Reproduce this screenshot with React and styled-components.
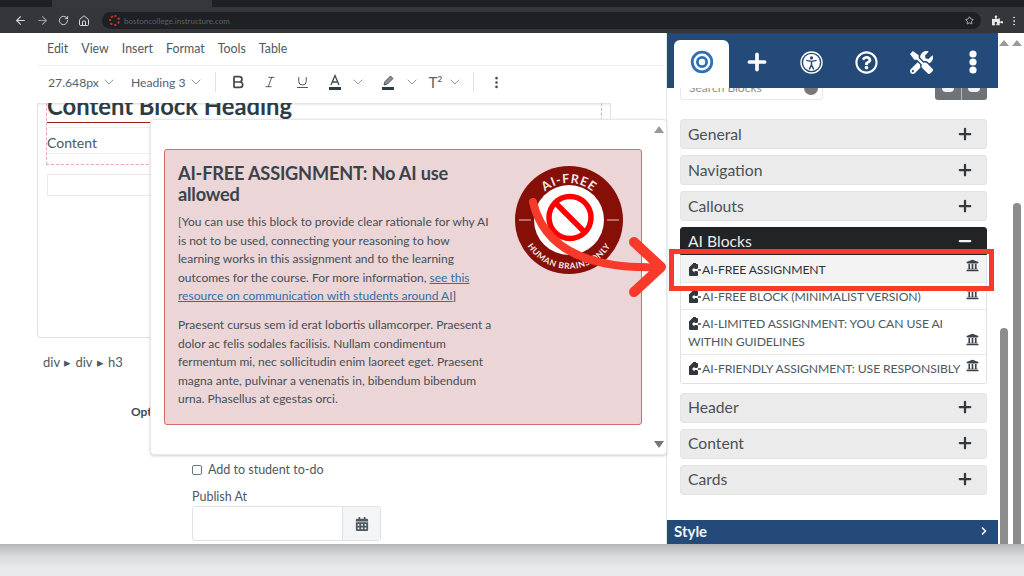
import React from 'react';
import styled, { createGlobalStyle } from 'styled-components';
import { ArrowLeft, ArrowRight, RotateCw, Home, Star, EllipsisVertical, ChevronDown, ChevronRight, Bold, Italic, Underline, Plus, Minus } from 'lucide-react';
import { FaCalendarAlt, FaPuzzlePiece, FaRegQuestionCircle, FaTools, FaUniversity } from 'react-icons/fa';

const GlobalStyle = createGlobalStyle`
  html, body { margin: 0; padding: 0; height: 576px; overflow: hidden; background: #e9eaeb; }
  body { font-family: Lato, 'Liberation Sans', sans-serif; color: #3f4a52; }
  * { box-sizing: border-box; }
`;

const Page = styled.div`
  position: relative;
  width: 1024px;
  height: 576px;
  overflow: hidden;
  display: flex;
  flex-direction: column;
`;

/* browser chrome */
const TabStrip = styled.div`
  height: 7px;
  flex: none;
  background: #1f2023;
  display: flex;
  padding-left: 52px;
`;
const ActiveTab = styled.div`
  width: 160px;
  background: #36373b;
`;
const BrowserBar = styled.div`
  height: 26px;
  flex: none;
  background: #35363a;
  display: flex;
  align-items: center;
  padding: 5px 4px 4px 14px;
  color: #d8d9db;
  gap: 9px;
`;
const UrlBar = styled.div`
  flex: 1;
  height: 17px;
  margin-left: 3px;
  margin-right: 2px;
  border-radius: 9px;
  background: #1f2023;
  display: flex;
  align-items: center;
  padding: 0 7px;
  gap: 4px;
  font-size: 8px;
  color: #5e6064;
`;
const Favicon = styled.span`
  width: 11px;
  height: 11px;
  border-radius: 50%;
  border: 2.5px dotted #c8362c;
`;
const Grow = styled.span`
  flex: 1;
`;
const ExtensionIcons = styled.div`
  display: flex;
  align-items: center;
  gap: 5px;
`;

/* page body */
const Body = styled.div`
  flex: none;
  height: 511px;
  background: #fff;
  display: flex;
  overflow: hidden;
`;
const Editor = styled.div`
  width: 667px;
  flex: none;
  border-right: 1px solid #e5e7e9;
  padding-left: 37px;
  display: flex;
  flex-direction: column;
`;
const MenuBar = styled.div`
  height: 33px;
  flex: none;
  display: flex;
  align-items: center;
  gap: 13px;
  padding: 0 0 2px 10px;
  font-size: 12.4px;
  color: #4d5961;
  border-bottom: 1px solid #eef0f1;
`;
const Toolbar = styled.div`
  height: 37px;
  flex: none;
  display: flex;
  align-items: center;
  padding: 0 0 5px 11px;
  font-size: 12.2px;
  color: #56626b;
`;
const ToolText = styled.span`
  display: inline-flex;
  align-items: center;
  gap: 2px;
  margin-right: ${(p) => p.$right || 0}px;
`;
const ToolIcon = styled.span`
  display: inline-flex;
  align-items: center;
  justify-content: center;
  margin-left: ${(p) => p.$gap || 0}px;
  color: ${(p) => (p.$muted ? '#7d878f' : '#3f4a52')};
`;
const Divider = styled.span`
  width: 1px;
  height: 20px;
  margin: 0 ${(p) => p.$right}px 0 ${(p) => p.$left}px;
  background: #dfe3e6;
`;
const SwatchIcon = styled.svg`
  display: block;
`;
const SuperT = styled.span`
  width: 18px;
  font-size: 15px;
  font-weight: 400;
  line-height: 16px;
  color: #56626b;
  sup {
    font-size: 8px;
    font-weight: 700;
    line-height: 0;
  }
`;
const EditFrame = styled.div`
  width: 574px;
  height: 235px;
  flex: none;
  border: 1px solid #dfe1e3;
  border-top: 0;
  border-radius: 0 0 3px 3px;
  padding: 0 8px;
  overflow: hidden;
  box-shadow: inset 0 3px 3px -2px #d5d7d9;
`;
const DashedBlock = styled.div`
  display: flow-root;
  height: 62px;
  border: 1px dashed #eba6b4;
  border-top: 0;
`;
const BlockHeading = styled.h3`
  margin: -11px 0 0;
  height: 27px;
  font-size: 23.8px;
  line-height: 28px;
  font-weight: 700;
  color: #2d3b45;
`;
const RedRule = styled.div`
  width: 104px;
  height: 1px;
  margin-top: 3px;
  background: #9e1b1b;
`;
const ContentCell = styled.div`
  height: 27px;
  margin-top: 4px;
  padding-top: 7px;
  border: 1px solid #eef0f1;
  border-left: 0;
  font-size: 14px;
  line-height: 16px;
  color: #4d5961;
`;
const EmptyCell = styled.div`
  height: 22px;
  margin: 9px 0 0 1px;
  border: 1px solid #e8eaec;
`;
const Path = styled.div`
  margin: 16px 0 0 6px;
  font-size: 13px;
  color: #4d5961;
  word-spacing: 1px;
`;
const Options = styled.div`
  margin: 34px 0 0 94px;
  font-size: 12px;
  font-weight: 700;
  color: #3f4a52;
`;
const FormCol = styled.div`
  margin: 43px 0 0 155px;
  font-size: 12.5px;
  color: #4d5961;
`;
const CheckRow = styled.label`
  display: flex;
  align-items: center;
  gap: 6px;
`;
const CheckBox = styled.span`
  width: 10px;
  height: 10px;
  border: 1px solid #6b7780;
  border-radius: 2px;
`;
const FieldLabel = styled.div`
  margin-top: 12px;
  margin-bottom: 2px;
`;
const DateField = styled.div`
  width: 189px;
  height: 35px;
  display: flex;
  border: 1px solid #dfe3e6;
  border-radius: 3px;
`;
const DateInput = styled.div`
  flex: 1;
`;
const DateButton = styled.div`
  width: 38px;
  background: #f4f5f6;
  border-left: 1px solid #dfe3e6;
  display: flex;
  align-items: center;
  justify-content: center;
  color: #4d5961;
`;

/* preview popover over the editor */
const Popover = styled.div`
  position: absolute;
  left: 150px;
  top: 119px;
  width: 517px;
  height: 336px;
  background: #fff;
  border: 1px solid #e6e7e8;
  border-radius: 4px;
  box-shadow: 0 1px 3px rgba(0, 0, 0, 0.18);
  padding: 29px 24px 0 13px;
`;
const ScrollArrow = styled.span`
  position: absolute;
  right: 2px;
  ${(p) => (p.$down ? 'bottom: 6px;' : 'top: 6px;')}
  width: 0;
  height: 0;
  border-left: 5px solid transparent;
  border-right: 5px solid transparent;
  ${(p) => (p.$down ? 'border-top: 7px solid #777;' : 'border-bottom: 7px solid #999;')}
`;
const Callout = styled.div`
  position: relative;
  height: 276px;
  background: #ebd5d7;
  border: 1px solid #d9696c;
  border-radius: 3px;
  padding: 13px 13px;
  color: #454e55;
`;
const CalloutTitle = styled.h3`
  margin: 0 0 8px;
  width: 300px;
  font-size: 18.2px;
  line-height: 21px;
  font-weight: 700;
  letter-spacing: -0.2px;
  color: #3b4349;
`;
const CalloutText = styled.p`
  margin: 0 0 10px;
  width: 315px;
  font-size: 12px;
  line-height: 18.6px;
  a { color: #2f6fa8; text-decoration: underline; }
`;
const Badge = styled.svg`
  position: absolute;
  left: 350px;
  top: 16px;
`;

/* block sidebar */
const Sidebar = styled.div`
  position: relative;
  width: 332px;
  flex: none;
  display: flex;
  flex-direction: column;
`;
const SideTabs = styled.div`
  width: 331px;
  height: 55px;
  flex: none;
  background: #234a78;
  display: flex;
  align-items: flex-end;
  padding-left: 7px;
  color: #fff;
`;
const SideTab = styled.div`
  width: ${(p) => p.$w || 55}px;
  height: 48px;
  display: flex;
  align-items: center;
  justify-content: center;
  padding-bottom: 4px;
  border-radius: 6px 6px 0 0;
  background: ${(p) => (p.$active ? '#fff' : 'transparent')};
  color: ${(p) => (p.$active ? '#2d71b8' : '#fff')};
`;
const SearchRow = styled.div`
  height: 31px;
  flex: none;
  padding: 0 12px 0 13px;
  display: flex;
  justify-content: space-between;
  align-items: flex-start;
`;
const SearchBox = styled.div`
  width: 143px;
  height: 12px;
  display: flex;
  align-items: flex-end;
  justify-content: space-between;
  padding: 0 4px 0 8px;
  border: 1px solid #e4e8ec;
  border-top: 0;
  border-radius: 0 0 4px 4px;
  font-size: 12px;
  line-height: 12px;
  color: #8b8f93;
  overflow: hidden;
`;
const SearchHint = styled.span`
  margin-bottom: 5px;
`;
const SearchClear = styled.span`
  width: 14px;
  height: 14px;
  flex: none;
  margin-bottom: 4px;
  border-radius: 50%;
  background: #777;
`;
const ToggleGroup = styled.div`
  width: 52px;
  height: 12px;
  display: flex;
  border-radius: 0 0 3px 3px;
  overflow: hidden;
  background: #6e7378;
`;
const Toggle = styled.span`
  flex: 1;
  display: flex;
  justify-content: center;
  & + & { border-left: 1px solid #bbb; }
  &::before {
    content: '';
    width: 12px;
    height: 4px;
    border-radius: 0 0 5px 5px;
    background: #f2f3f4;
  }
`;
const Accordions = styled.div`
  flex: 1;
  padding: 0 12px 0 13px;
`;
const Section = styled.div`
  height: 30px;
  margin-bottom: 6px;
  padding: 0 12px 1px 7px;
  display: flex;
  align-items: center;
  justify-content: space-between;
  background: #ebebeb;
  border: 1px solid #e3e4e5;
  border-radius: 3px;
  font-size: 15.7px;
  color: #4a5056;
`;
const OpenSection = styled(Section)`
  height: 28px;
  margin: 0;
  padding-top: 1px;
  background: #212327;
  border-color: #212327;
  border-radius: 3px 3px 0 0;
  color: #e9eaeb;
`;
const BlockList = styled.div`
  margin-bottom: 9px;
  border: 1px solid #dfe3e6;
  border-top: 0;
  border-radius: 0 0 3px 3px;
`;
const BlockRow = styled.div`
  position: relative;
  min-height: ${(p) => (p.$tall ? 45 : 27.5)}px;
  padding: ${(p) => (p.$hot ? 6 : 5)}px 24px 2px 7px;
  border-bottom: 1px solid #e6e9eb;
  background: ${(p) => (p.$hot ? '#f3f3f4' : '#fff')};
  color: ${(p) => (p.$hot ? '#2d3338' : '#4d5961')};
  font-size: 12.2px;
  line-height: 18px;
  letter-spacing: -0.1px;
  &:last-child { border-bottom: 0; }
`;
const BlockGlyph = styled.svg`
  vertical-align: -2px;
  margin-right: 1px;
`;
const RowBank = styled.span`
  position: absolute;
  right: 7px;
  top: ${(p) => (p.$tall ? 23 : 4)}px;
  display: flex;
  color: #3a4148;
`;
const StyleBar = styled.div`
  width: 331px;
  height: 24px;
  flex: none;
  display: flex;
  align-items: center;
  justify-content: space-between;
  padding: 0 8px 2px 7px;
  background: #234a78;
  color: #f2f4f7;
  font-size: 15px;
  font-weight: 700;
`;

/* window scrollbars */
const Gutter = styled.div`
  flex: 1;
  display: flex;
  gap: 3px;
  background: #fff;
`;
const ScrollColumn = styled.div`
  width: 10px;
  padding-top: 7px;
  display: flex;
  flex-direction: column;
  align-items: center;
`;
const TopArrow = styled.span`
  width: 0;
  height: 0;
  border-left: 5px solid transparent;
  border-right: 5px solid transparent;
  border-bottom: 6px solid #9a9a9a;
`;
const Thumb = styled.div`
  width: 8px;
  height: ${(p) => p.$h}px;
  margin-top: auto;
  border-radius: 4px 4px 0 0;
  background: #8c8c8c;
`;
const BottomShade = styled.div`
  flex: 1;
  background: linear-gradient(#b5b6b7, #c9cacb 6px, #dcdde0 14px, #e9eaeb 24px);
`;

/* red annotation */
const Highlight = styled.div`
  position: absolute;
  left: 669px;
  top: 249px;
  width: 325px;
  height: 42px;
  border: 5px solid #f83a2b;
`;
const Annotation = styled.svg`
  position: absolute;
  left: 520px;
  top: 190px;
`;

const BadgeArt = () => (
  <Badge width="108" height="108" viewBox="0 0 108 108">
    <defs>
      <path id="arcTop" d="M17 54a37 37 0 0 1 74 0" />
      <path id="arcBottom" d="M5 54a49 49 0 0 0 98 0" />
    </defs>
    <circle cx="54" cy="54" r="54" fill="#860f08" />
    <circle cx="54" cy="54" r="35" fill="#fff" />
    <path d="M4 54h12M92 54h12" stroke="#e8c9c6" strokeWidth="1" />
    <text fontFamily="Lato, sans-serif" fontSize="12.5" fontWeight="700" fill="#f4e6e4" letterSpacing="0.8">
      <textPath href="#arcTop" startOffset="50%" textAnchor="middle">AI-FREE</textPath>
    </text>
    <text fontFamily="Lato, sans-serif" fontSize="8.5" fontWeight="700" fill="#f4e6e4" letterSpacing="0.5">
      <textPath href="#arcBottom" startOffset="50%" textAnchor="middle">HUMAN BRAINS ONLY</textPath>
    </text>
    <circle cx="55" cy="51.5" r="21" fill="none" stroke="#ff0000" strokeWidth="5.5" />
    <path d="M41 37.5l28 28" stroke="#ff0000" strokeWidth="5.5" />
  </Badge>
);

const PuzzleGlyph = () => (
  <BlockGlyph width="13" height="13" viewBox="0 0 13 13">
    <path d="M1 4.5L4.5 1H5V0h3v1h1.5Q10 1 10 2v3.5h-1V8.5h1V12q0 1-1 1H2q-1 0-1-1z" fill="#30363c" />
    <path d="M6.5 4.5L4 7l2.5 2.5V8H13V6H6.5z" fill="#fff" />
    <path d="M10 6.3h3v1.4h-3z" fill="#30363c" />
  </BlockGlyph>
);

const TargetIcon = () => (
  <svg width="24" height="24" viewBox="0 0 24 24" fill="none" stroke="currentColor" strokeWidth="2.8">
    <circle cx="12" cy="12" r="9.8" />
    <circle cx="12" cy="12" r="4.6" />
  </svg>
);

const AccessIcon = () => (
  <svg width="23" height="23" viewBox="0 0 24 24" fill="none" stroke="#fff">
    <circle cx="12" cy="12" r="11" strokeWidth="1.4" />
    <circle cx="12" cy="12" r="8.8" fill="#fff" stroke="none" />
    <circle cx="12" cy="7.2" r="1.7" fill="#234a78" stroke="none" />
    <path d="M6.6 9.8l5.4 1 5.4-1M12 11v3.5M12 14.5l-2.4 4.6M12 14.5l2.4 4.6" stroke="#234a78" strokeWidth="1.5" />
  </svg>
);

const DotsIcon = () => (
  <svg width="8" height="24" viewBox="0 0 8 24" fill="#fff">
    <circle cx="4" cy="4" r="3.6" />
    <circle cx="4" cy="12" r="3.6" />
    <circle cx="4" cy="20" r="3.6" />
  </svg>
);

const TextColorIcon = () => (
  <SwatchIcon width="14" height="16" viewBox="0 0 14 16" fill="none" stroke="#3f4a52">
    <path d="M3 11L7 1.5 11 11M4.5 8h5" strokeWidth="1.3" />
    <path d="M1 14.5h12" stroke="#2d3b45" strokeWidth="3" />
  </SwatchIcon>
);

const HighlightIcon = () => (
  <SwatchIcon width="14" height="16" viewBox="0 0 14 16" fill="none" stroke="#3f4a52">
    <path d="M3 11l1-3.5L9.5 2l2.5 2.5L6.5 10z" fill="#8b9298" strokeWidth="0.9" />
    <path d="M1 14.5h12" stroke="#2d3b45" strokeWidth="3" />
  </SwatchIcon>
);

const blocks = [
  { name: 'AI-FREE ASSIGNMENT', hot: true },
  { name: 'AI-FREE BLOCK (MINIMALIST VERSION)' },
  { name: 'AI-LIMITED ASSIGNMENT: YOU CAN USE AI WITHIN GUIDELINES', tall: true },
  { name: 'AI-FRIENDLY ASSIGNMENT: USE RESPONSIBLY' },
];

export default function App() {
  const caret = <ChevronDown size={16} strokeWidth={1.1} color="#6b757d" />;
  return (
    <Page>
      <GlobalStyle />
      <TabStrip><ActiveTab /></TabStrip>
      <BrowserBar>
        <ArrowLeft size={13} />
        <ArrowRight size={13} color="#9a9b9e" />
        <RotateCw size={11} />
        <Home size={12} />
        <UrlBar>
          <Favicon />
          bostoncollege.instructure.com
          <Grow />
          <Star size={9} color="#d8d9db" />
        </UrlBar>
        <ExtensionIcons>
          <FaPuzzlePiece size={11} color="#e8e9ea" />
          <EllipsisVertical size={12} />
        </ExtensionIcons>
      </BrowserBar>
      <Body>
        <Editor>
          <MenuBar>
            <span>Edit</span><span>View</span><span>Insert</span><span>Format</span><span>Tools</span><span>Table</span>
          </MenuBar>
          <Toolbar>
            <ToolText $right={14}>27.648px {caret}</ToolText>
            <ToolText>Heading 3 {caret}</ToolText>
            <Divider $left={11} $right={14} />
            <ToolIcon><Bold size={16} strokeWidth={2.6} /></ToolIcon>
            <ToolIcon $gap={17}><Italic size={14} strokeWidth={1.5} /></ToolIcon>
            <ToolIcon $gap={18}><Underline size={15} strokeWidth={1.5} /></ToolIcon>
            <ToolIcon $gap={18}><TextColorIcon /></ToolIcon>
            <ToolIcon $gap={8}>{caret}</ToolIcon>
            <ToolIcon $gap={15}><HighlightIcon /></ToolIcon>
            <ToolIcon $gap={9}>{caret}</ToolIcon>
            <ToolIcon $gap={9}><SuperT>T<sup>2</sup></SuperT></ToolIcon>
            <ToolIcon>{caret}</ToolIcon>
            <Divider $left={10} $right={15} />
            <ToolIcon><EllipsisVertical size={15} strokeWidth={2.2} /></ToolIcon>
          </Toolbar>
          <EditFrame>
            <DashedBlock>
              <BlockHeading>Content Block Heading</BlockHeading>
              <RedRule />
              <ContentCell>Content</ContentCell>
            </DashedBlock>
            <EmptyCell />
          </EditFrame>
          <Path>div ▸ div ▸ h3</Path>
          <Options>Options</Options>
          <FormCol>
            <CheckRow><CheckBox />Add to student to-do</CheckRow>
            <FieldLabel>Publish At</FieldLabel>
            <DateField>
              <DateInput />
              <DateButton><FaCalendarAlt size={14} /></DateButton>
            </DateField>
          </FormCol>
        </Editor>
        <Sidebar>
          <SideTabs>
            <SideTab $active><TargetIcon /></SideTab>
            <SideTab><Plus size={26} strokeWidth={3.4} /></SideTab>
            <SideTab><AccessIcon /></SideTab>
            <SideTab><FaRegQuestionCircle size={23} /></SideTab>
            <SideTab><FaTools size={23} /></SideTab>
            <SideTab $w={47}><DotsIcon /></SideTab>
          </SideTabs>
          <SearchRow>
            <SearchBox><SearchHint>Search Blocks</SearchHint><SearchClear /></SearchBox>
            <ToggleGroup><Toggle /><Toggle /></ToggleGroup>
          </SearchRow>
          <Accordions>
            {['General', 'Navigation', 'Callouts'].map((name) => (
              <Section key={name}>{name}<Plus size={18} strokeWidth={3} color="#33383d" /></Section>
            ))}
            <OpenSection>AI Blocks<Minus size={18} strokeWidth={3} color="#f2f2f2" /></OpenSection>
            <BlockList>
              {blocks.map((b) => (
                <BlockRow key={b.name} $hot={b.hot} $tall={b.tall}>
                  <PuzzleGlyph />{b.name}
                  <RowBank $tall={b.tall}><FaUniversity size={13} /></RowBank>
                </BlockRow>
              ))}
            </BlockList>
            {['Header', 'Content', 'Cards'].map((name) => (
              <Section key={name}>{name}<Plus size={18} strokeWidth={3} color="#33383d" /></Section>
            ))}
          </Accordions>
          <StyleBar>Style<ChevronRight size={12} strokeWidth={3.5} /></StyleBar>
        </Sidebar>
        <Gutter>
          <ScrollColumn><TopArrow /><Thumb $h={216} /></ScrollColumn>
          <ScrollColumn><TopArrow /><Thumb $h={341} /></ScrollColumn>
        </Gutter>
      </Body>
      <BottomShade />
      <Popover>
        <ScrollArrow />
        <ScrollArrow $down />
        <Callout>
          <CalloutTitle>AI-FREE ASSIGNMENT: No AI use allowed</CalloutTitle>
          <CalloutText>
            [You can use this block to provide clear rationale for why AI is not to be used, connecting your reasoning to how learning works in this assignment and to the learning outcomes for the course. For more information, <a href="#r">see this resource on communication with students around AI</a>]
          </CalloutText>
          <CalloutText>
            Praesent cursus sem id erat lobortis ullamcorper. Praesent a dolor ac felis sodales facilisis. Nullam condimentum fermentum mi, nec sollicitudin enim laoreet eget. Praesent magna ante, pulvinar a venenatis in, bibendum bibendum urna. Phasellus at egestas orci.
          </CalloutText>
          <BadgeArt />
        </Callout>
      </Popover>
      <Highlight />
      <Annotation width="150" height="120" viewBox="0 0 150 120" fill="none" stroke="#f83a2b" strokeLinecap="round" strokeLinejoin="round">
        <path d="M13 12C22 50 55 80 140 77" strokeWidth="8" />
        <path d="M114 52L141 77L114 102" strokeWidth="10" />
      </Annotation>
    </Page>
  );
}
